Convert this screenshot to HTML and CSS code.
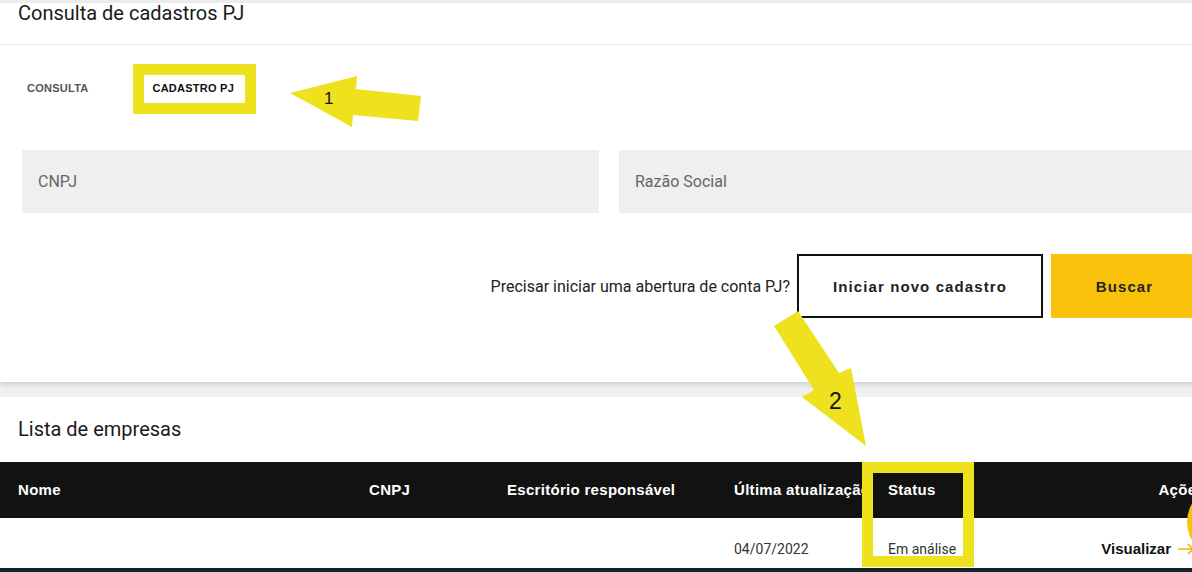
FILE: index.html
```html
<!DOCTYPE html>
<html lang="pt-BR">

<head>
  <meta charset="UTF-8" />
  <meta name="viewport" content="width=device-width, initial-scale=1.0" />
  <title>Consulta de cadastros PJ</title>
  <link rel="stylesheet" href="styles.css">
</head>

<body>
  <div class="page">
    <section class="card search-card">
      <h1 class="card-title">Consulta de cadastros PJ</h1>

      <nav class="tabs">
        <span class="tab">CONSULTA</span>
        <span class="tab active">CADASTRO PJ</span>
      </nav>

      <div class="fields">
        <div class="field">CNPJ</div>
        <div class="field">Razão Social</div>
      </div>

      <div class="actions">
        <span class="hint">Precisar iniciar uma abertura de conta PJ?</span>
        <button class="btn btn-outline">Iniciar novo cadastro</button>
        <button class="btn btn-primary">Buscar</button>
      </div>
    </section>

    <section class="card list-card">
      <h2 class="card-title list-title">Lista de empresas</h2>

      <div class="table">
        <div class="tbl-row tbl-head">
          <span>Nome</span>
          <span>CNPJ</span>
          <span>Escritório responsável</span>
          <span class="clip">Última atualização</span>
          <span>Status</span>
          <span class="col-action">Ações</span>
        </div>
        <div class="tbl-row tbl-body">
          <span></span>
          <span></span>
          <span></span>
          <span>04/07/2022</span>
          <span>Em análise</span>
          <a class="col-action view-link">Visualizar
            <svg width="18" height="12" viewBox="0 0 18 12">
              <path d="M1 6h15M11 1l5 5-5 5" fill="none" stroke="#f0b70c" stroke-width="1.6" />
            </svg>
          </a>
        </div>
      </div>
    </section>

    <div class="fab"></div>

    <!-- annotations -->
    <div class="mark mark-tab"></div>
    <div class="mark mark-status"></div>
    <svg class="arrows" width="1192" height="572" viewBox="0 0 1192 572">
      <polygon points="290,93 357,76 356,89 421,96 418,121 353,115 352,127" fill="#eee21f" />
      <text x="324" y="104" class="arrow-num num-1">1</text>
      <polygon points="774,326 798,311 839,373 851,368 866,446 802,397 814,390" fill="#eee21f" />
      <text x="829" y="409" class="arrow-num num-2">2</text>
    </svg>
  </div>
</body>

</html>
```

FILE: styles.css
```css
* { margin: 0; padding: 0; box-sizing: border-box; }
body {
  font-family: Roboto, "Liberation Sans", Arial, sans-serif;
  background-color: #f0f0f0;
  color: #222;
  width: 1192px;
  height: 572px;
  overflow: hidden;
}
.page {
  position: relative;
  width: 1230px;
}
.card {
  background-color: #fff;
}
.card-title {
  font-size: 20px;
  font-weight: 400;
  line-height: 20px;
  color: #1a1a1a;
  padding-left: 18px;
}
/* Search card */
.search-card {
  border-top: 3px solid #ececec;
  padding-bottom: 64px;
  box-shadow: 0 3px 5px rgba(0, 0, 0, 0.13);
}
.search-card .card-title {
  height: 42px;
  border-bottom: 1px solid #ebebeb;
}
.tabs {
  display: flex;
  gap: 64px;
  margin-top: 33px;
  padding-left: 27px;
  height: 20px;
  align-items: center;
}
.tab {
  font-family: "Liberation Sans", Arial, sans-serif;
  font-size: 11px;
  font-weight: 700;
  letter-spacing: 0.25px;
  color: #555;
}
.tab.active { color: #111; }
.fields {
  display: grid;
  grid-template-columns: 577px 1fr;
  gap: 20px;
  margin-top: 52px;
  padding: 0 22px;
}
.field {
  background-color: #efefef;
  height: 63px;
  display: flex;
  align-items: center;
  padding-left: 16px;
  font-size: 16px;
  color: #666;
}
.actions {
  display: flex;
  justify-content: flex-end;
  align-items: center;
  margin-top: 41px;
  padding-right: 22px;
}
.hint {
  font-size: 16px;
  color: #222;
  margin-right: 7px;
}
.btn {
  height: 64px;
  font-family: "Liberation Sans", Arial, sans-serif;
  font-size: 15px;
  font-weight: 700;
  letter-spacing: 1.1px;
  color: #222;
  cursor: pointer;
}
.btn-outline {
  width: 246px;
  background: #fff;
  border: 2px solid #111;
  margin-right: 8px;
}
.btn-primary {
  width: 157px;
  padding-right: 10px;
  background-color: #f9c20a;
  border: none;
}
/* List card */
.list-card {
  margin-top: 15px;
  padding-bottom: 40px;
}
.list-title {
  padding-top: 22px;
  padding-bottom: 23px;
}
.tbl-row {
  display: grid;
  grid-template-columns: 351px 138px 227px 154px 1fr 130px;
  padding: 0 25px 0 18px;
  font-size: 14px;
}
.tbl-row span { white-space: nowrap; overflow: hidden; }
.tbl-head {
  background-color: #121212;
  color: #fff;
  height: 56px;
  align-items: center;
  padding-bottom: 2px;
  font-family: "Liberation Sans", Arial, sans-serif;
  font-size: 15px;
  font-weight: 700;
  letter-spacing: 0.3px;
}
.tbl-body {
  height: 54px;
  align-items: end;
  padding-bottom: 11px;
  color: #333;
  border-bottom: 4px solid #112629;
}
.col-action { justify-self: end; text-align: right; }
.view-link {
  display: flex;
  align-items: center;
  gap: 6px;
  font-family: "Liberation Sans", Arial, sans-serif;
  font-size: 15px;
  font-weight: 700;
  color: #111;
  margin-right: 10px;
}
.fab {
  position: absolute;
  left: 1187px;
  top: 486px;
  width: 72px;
  height: 72px;
  border-radius: 50%;
  background-color: #f9c20a;
}
/* Annotations */
.mark {
  position: absolute;
  border: 11px solid #eee21f;
}
.mark-tab { left: 133px; top: 64px; width: 123px; height: 50px; }
.mark-status { left: 862px; top: 462px; width: 112px; height: 105px; }
.arrows {
  position: absolute;
  top: 0;
  left: 0;
  pointer-events: none;
}
.arrow-num {
  font-family: "Liberation Sans", Arial, sans-serif;
  fill: #111;
}
.num-1 { font-size: 17px; }
.num-2 { font-size: 23px; }
```
